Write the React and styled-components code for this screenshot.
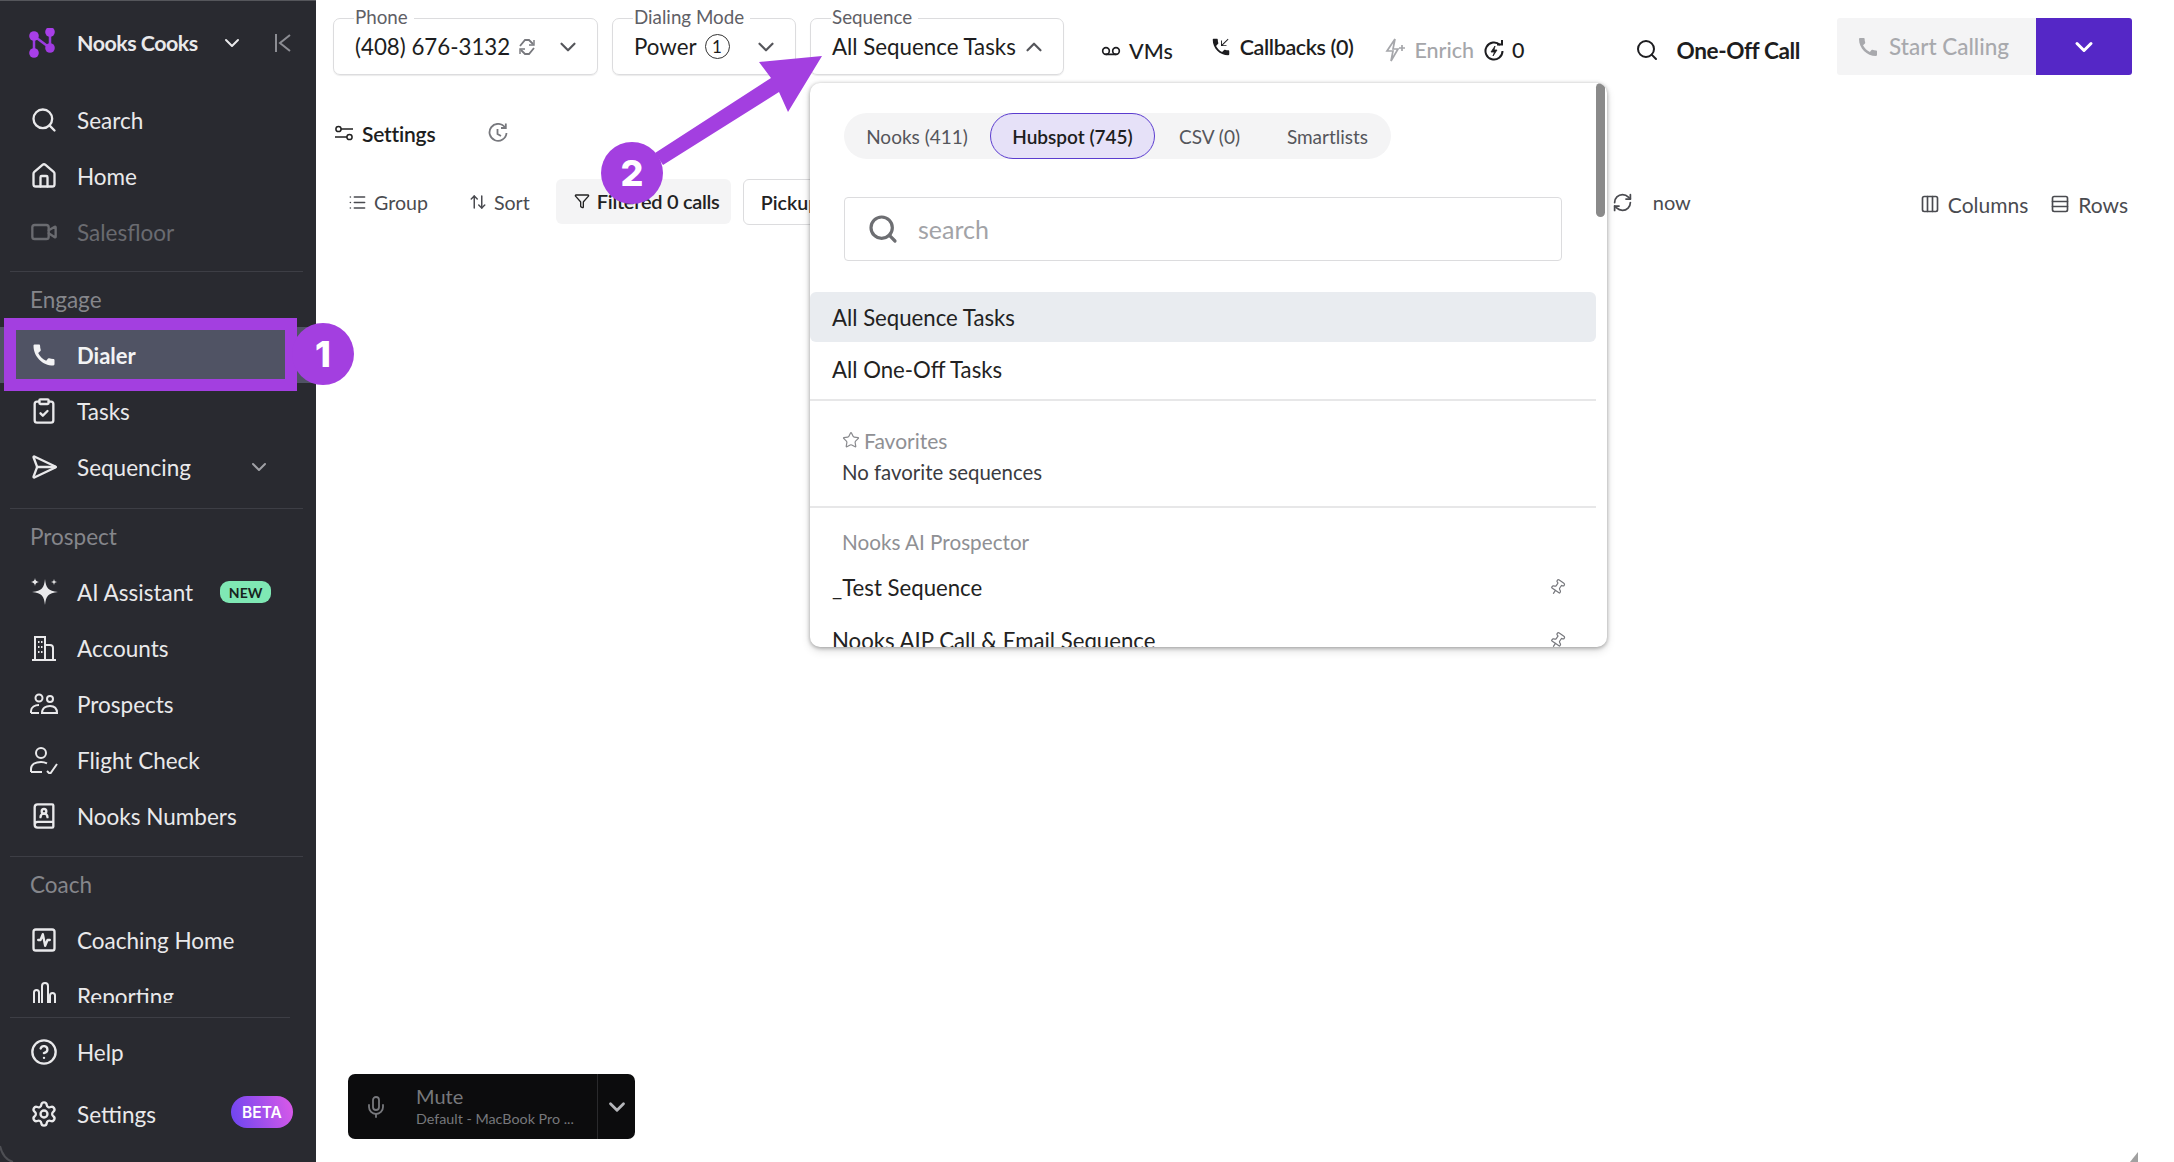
import React from "react";
import styled, { createGlobalStyle } from "styled-components";
import {
  Search,
  House,
  Video,
  ClipboardCheck,
  SendHorizontal,
  BookUser,
  SquareActivity,
  CircleHelp,
  Settings as SettingsIcon,
  ChevronDown,
  ChevronUp,
  Voicemail,
  List,
  ArrowUpDown,
  Funnel,
  RefreshCw,
  Columns3,
  Rows3,
  Star,
  Pin,
  Mic,
} from "lucide-react";
import { MdCall, MdPhoneCallback } from "react-icons/md";

const PURPLE = "#a33fe0";

const GlobalStyle = createGlobalStyle`
  html, body { margin: 0; padding: 0; background: #fff; }
  body { font-family: "Lato", "Liberation Sans", sans-serif; }
  * { box-sizing: border-box; }
`;

const Page = styled.div`
  position: relative;
  display: flex;
  width: 2174px;
  height: 1162px;
  overflow: hidden;
  background: #fff;
`;

const Sidebar = styled.aside`
  display: flex;
  flex-direction: column;
  flex: none;
  width: 316px;
  height: 100%;
  border-top: 1px solid #55565b;
  background: #292a30;
  color: #e9e9eb;
`;

const Brand = styled.div`
  display: flex;
  align-items: center;
  flex: none;
  height: 91px;
  padding: 0 0 8px 28px;
  font-size: 21.4px;
  font-weight: 700;
  letter-spacing: -0.5px;
  white-space: nowrap;
  span { margin-left: 21px; }
`;

const BrandChevron = styled.div`
  display: flex;
  margin-left: 22px;
`;

const Collapse = styled.div`
  display: flex;
  margin-left: 30px;
  color: #8c8d93;
`;

const Nav = styled.nav`
  flex: 1;
  min-height: 0;
  overflow: hidden;
`;

const Item = styled.div`
  display: flex;
  align-items: center;
  height: ${(p) => p.$height || 56}px;
  padding-left: 30px;
  font-size: 22.5px;
  color: ${(p) => (p.$off ? "#6a6b70" : "#e9e9eb")};
  svg.icon { flex: none; width: 28px; height: 28px; }
  span.name { margin-left: 19px; }
`;

const DialerItem = styled(Item)`
  background: #505364;
  font-weight: 700;
  font-size: 22px;
  color: #f3f3f5;
`;

const SectionLabel = styled.div`
  display: flex;
  align-items: center;
  height: 55px;
  padding-left: 30px;
  font-size: 22.5px;
  color: #85868b;
`;

const Rule = styled.div`
  height: 1px;
  margin: ${(p) => p.$top || 0}px ${(p) => p.$right || 13}px ${(p) => p.$bottom || 0}px 10px;
  background: #3d3e45;
`;

const Tag = styled.span`
  display: flex;
  align-items: center;
  justify-content: center;
  width: 51px;
  height: 22px;
  margin-left: 27px;
  border-radius: 9px;
  background: #7fe8b4;
  color: #17241e;
  font-size: 14px;
  font-weight: 700;
`;

const NavChevron = styled.div`
  display: flex;
  margin-left: 56px;
  color: #a0a1a6;
`;

const Foot = styled.div`
  flex: none;
  padding-top: 14px;
  padding-bottom: 17px;
`;

const BetaTag = styled.span`
  display: flex;
  align-items: center;
  justify-content: center;
  width: 62px;
  height: 32px;
  margin-left: auto;
  margin-right: 23px;
  margin-top: -4px;
  border-radius: 16px;
  background: linear-gradient(75deg, #6b45f0, #dc5ae8);
  color: #fff;
  font-family: "Inter", sans-serif;
  font-size: 15.5px;
  font-weight: 600;
`;

const Main = styled.main`
  display: flex;
  flex-direction: column;
  flex: 1;
  min-width: 0;
  height: 100%;
  color: #1d1d20;
`;

const TopBar = styled.div`
  display: flex;
  align-items: flex-start;
  flex: none;
  padding: 0 0 0 17px;
  height: 75px;
`;

const Field = styled.fieldset`
  position: relative;
  display: flex;
  align-items: center;
  width: ${(p) => p.$width}px;
  height: 67px;
  margin: 8px ${(p) => p.$gap || 0}px 0 0;
  padding: 0 0 9px 21px;
  border: 1px solid #dcdcde;
  border-radius: 7px;
  box-shadow: 0 1px 1px rgba(0, 0, 0, 0.08);
  font-size: 22.3px;
  legend {
    height: 20px;
    margin-left: -1px;
    padding: 0 6px 0 1px;
    font-size: 18.8px;
    line-height: 18px;
    color: #5f6066;
  }
`;

const FieldChevron = styled.div`
  display: flex;
  margin-left: auto;
  margin-right: 16px;
  color: #55565b;
`;

const Circled = styled.span`
  display: inline-flex;
  align-items: center;
  justify-content: center;
  width: 25px;
  height: 25px;
  margin-left: 8px;
  border: 1.5px solid #333;
  border-radius: 50%;
  font-size: 17px;
`;

const TopAction = styled.div`
  display: flex;
  align-items: center;
  gap: ${(p) => p.$gap || 8}px;
  height: 66px;
  margin-top: ${(p) => p.$top || 18}px;
  margin-left: ${(p) => p.$left || 0}px;
  font-size: ${(p) => (p.$bold ? 22.6 : 21.5)}px;
  font-weight: ${(p) => (p.$bold ? 700 : 500)};
  letter-spacing: ${(p) => (p.$bold ? -0.4 : 0)}px;
  color: ${(p) => (p.$muted ? "#a5a6aa" : "#1d1d20")};
`;

const Callbacks = styled(TopAction)`
  font-weight: 600;
  letter-spacing: -0.4px;
`;

const CallGroup = styled.div`
  display: flex;
  height: 57px;
  margin-top: 18px;
  margin-left: 37px;
`;

const StartCalling = styled.div`
  display: flex;
  align-items: center;
  gap: 9px;
  width: 199px;
  padding-left: 19px;
  background: #f4f4f5;
  color: #a8a9ad;
  font-size: 22.5px;
  font-weight: 500;
  border-radius: 3px 0 0 3px;
`;

const CallMenu = styled.div`
  display: flex;
  align-items: center;
  justify-content: center;
  width: 96px;
  background: #5527c6;
  color: #fff;
  border-radius: 0 3px 3px 0;
`;

const SettingsRow = styled.div`
  display: flex;
  align-items: center;
  flex: none;
  height: 42px;
  margin-top: 37px;
  padding-left: 18px;
  font-size: 21px;
  font-weight: 600;
  letter-spacing: -0.2px;
  span { margin-left: 8px; }
`;

const HistoryButton = styled.div`
  display: flex;
  margin-left: 53px;
  color: #77787d;
`;

const ViewBar = styled.div`
  display: flex;
  align-items: center;
  flex: none;
  height: 48px;
  margin-top: 24px;
  font-size: 19.6px;
  color: #4a4b50;
`;

const ViewAction = styled.div`
  display: flex;
  align-items: center;
  gap: 7px;
  margin-left: ${(p) => p.$left || 0}px;
`;

const WideAction = styled(ViewAction)`
  gap: 8px;
  margin-top: 4px;
  font-size: 21px;
`;

const FilteredButton = styled.div`
  display: flex;
  align-items: center;
  gap: 7px;
  width: 175px;
  height: 45px;
  margin-top: -2px;
  margin-left: 26px;
  padding-left: 18px;
  border-radius: 6px;
  background: #f4f4f5;
  color: #222;
  font-size: 20px;
  font-weight: 600;
  letter-spacing: -0.3px;
`;

const Chip = styled.div`
  display: flex;
  align-items: center;
  width: 160px;
  height: 46px;
  margin-left: 12px;
  padding-left: 17px;
  border: 1px solid #dcdcde;
  border-radius: 6px;
  color: #222;
  font-weight: 600;
`;

const NowLabel = styled.span`
  margin-left: 13px;
  font-size: 20px;
`;

const Spacer = styled.div`
  flex: 1;
`;

const MuteBar = styled.div`
  display: flex;
  align-items: stretch;
  flex: none;
  width: 287px;
  height: 65px;
  margin: 0 0 23px 32px;
  border-radius: 7px;
  background: #0c0c0d;
  color: #77787c;
`;

const MuteMain = styled.div`
  display: flex;
  align-items: center;
  flex: 1;
  padding-left: 16px;
  svg { color: #77787c; }
`;

const MuteText = styled.div`
  display: flex;
  flex-direction: column;
  margin-left: 28px;
  margin-top: -2px;
  b { font-size: 20px; font-weight: 400; line-height: 26px; }
  small { font-size: 14.3px; line-height: 20px; white-space: nowrap; }
`;

const MuteMenu = styled.div`
  display: flex;
  align-items: center;
  justify-content: center;
  width: 38px;
  border-left: 1px solid #2a2a2c;
  color: #b5b6ba;
`;

const SequenceWrap = styled.div`
  position: relative;
`;

const Dropdown = styled.div`
  position: absolute;
  top: 83px;
  left: 0;
  z-index: 3;
  display: flex;
  width: 797px;
  height: 564px;
  border-radius: 10px;
  background: #fff;
  box-shadow: 0 1px 4px rgba(0, 0, 0, 0.35), 0 4px 10px rgba(0, 0, 0, 0.12);
  overflow: hidden;
`;

const DropdownBody = styled.div`
  flex: 1;
  min-width: 0;
  overflow: hidden;
  padding-top: 30px;
`;

const ScrollTrack = styled.div`
  flex: none;
  width: 11px;
  padding-right: 2px;
`;

const ScrollThumb = styled.div`
  width: 9px;
  height: 134px;
  border-radius: 5px;
  background: #8a8a8a;
`;

const Tabs = styled.div`
  display: flex;
  align-items: center;
  width: 547px;
  height: 46px;
  margin-left: 34px;
  border-radius: 23px;
  background: #f4f4f5;
  font-size: 19px;
  color: #55565b;
`;

const Tab = styled.div`
  display: flex;
  align-items: center;
  justify-content: center;
  flex: none;
  width: ${(p) => p.$width}px;
  height: 46px;
  border-radius: 23px;
  ${(p) =>
    p.$active &&
    `
    background: #e6e1f8;
    border: 1.5px solid #5b3ccf;
    color: #1d1d20;
    font-weight: 600;
  `}
`;

const SearchBox = styled.div`
  display: flex;
  align-items: center;
  width: 718px;
  height: 64px;
  margin: 38px 0 31px 34px;
  padding-left: 22px;
  gap: 19px;
  border: 1.5px solid #dcdcde;
  border-radius: 4px;
  font-size: 25px;
  color: #a2a3a7;
  svg { color: #6d6e72; }
`;

const Row = styled.div`
  display: flex;
  align-items: center;
  height: ${(p) => p.$height || 50}px;
  margin-top: ${(p) => p.$top || 0}px;
  margin-bottom: ${(p) => p.$gap || 0}px;
  padding-left: 22px;
  padding-right: 30px;
  border-radius: 6px;
  font-size: 22.2px;
  background: ${(p) => (p.$active ? "#e9ecf0" : "transparent")};
  color: #222;
  svg { margin-left: auto; color: #77787d; transform: rotate(35deg); }
`;

const Divider = styled.div`
  height: 2px;
  margin-top: ${(p) => p.$top}px;
  background: #e7e7e8;
`;

const GroupTitle = styled.div`
  display: flex;
  align-items: center;
  gap: ${(p) => (p.$icon ? 4 : 0)}px;
  height: 30px;
  padding-left: 32px;
  font-size: ${(p) => (p.$icon ? 21 : 20.7)}px;
  color: #8f9094;
  margin-top: ${(p) => p.$top}px;
  svg { color: #88898d; }
`;

const EmptyNote = styled.div`
  margin-top: 4px;
  padding-left: 32px;
  font-size: 20.4px;
  line-height: 26px;
  color: #3a3b3f;
`;

const Annotations = styled.svg`
  position: absolute;
  left: 0;
  top: 0;
  width: 2174px;
  height: 1162px;
  z-index: 5;
  pointer-events: none;
`;

const Highlight = styled.div`
  position: absolute;
  left: 4px;
  top: 318px;
  z-index: 5;
  width: 293px;
  height: 73px;
  border: 12px solid ${PURPLE};
`;

const Step = styled.div`
  position: absolute;
  left: ${(p) => p.$x - 31}px;
  top: ${(p) => p.$y - 31}px;
  z-index: 6;
  display: flex;
  align-items: center;
  justify-content: center;
  width: 62px;
  height: 62px;
  border-radius: 50%;
  background: ${PURPLE};
  color: #fff;
  font-family: "Inter", sans-serif;
  font-size: 36px;
  font-weight: 800;
`;

function Logo() {
  return (
    <svg width="28" height="30" viewBox="0 0 28 30" fill="none">
      <path d="M6 8 V25 M6 8 L22 20 M22 4 V20" stroke="#9a3ce0" strokeWidth="2.5" />
      <circle cx="6" cy="8" r="4.8" fill="#a83fe8" />
      <circle cx="22" cy="4" r="4.8" fill="#a83fe8" />
      <circle cx="22" cy="20" r="4.8" fill="#a03be0" />
      <circle cx="6" cy="25" r="4.8" fill="#a83fe8" />
    </svg>
  );
}

function CollapseGlyph() {
  return (
    <svg width="18" height="20" viewBox="0 0 18 20" fill="none" stroke="currentColor" strokeWidth="2">
      <path d="M2 1 V19 M16 2 L6 10 L16 18" />
    </svg>
  );
}

function Sparkle() {
  return (
    <svg className="icon" viewBox="0 0 28 28" fill="currentColor">
      <path d="M15 1 C16 10 18 13 28 14 C18 15 16 18 15 27 C14 18 12 15 2 14 C12 13 14 10 15 1 Z" />
      <path d="M5 0 C5.4 2.6 6.4 3.6 9 4 C6.4 4.4 5.4 5.4 5 8 C4.6 5.4 3.6 4.4 1 4 C3.6 3.6 4.6 2.6 5 0 Z" />
      <path d="M24 1 L24.7 3.3 L27 4 L24.7 4.7 L24 7 L23.3 4.7 L21 4 L23.3 3.3 Z" />
    </svg>
  );
}

function Building() {
  return (
    <svg className="icon" viewBox="0 0 28 28" fill="none" stroke="currentColor" strokeWidth="2">
      <path d="M5 26 V3 H15 V26 M15 11 H20 C22 11 23 12 23 14 V26 M2 26 H26" />
      <path d="M8 8 H9.5 M11 8 H12.5 M8 13 H9.5 M11 13 H12.5 M8 18 H9.5 M11 18 H12.5" />
    </svg>
  );
}

function People() {
  return (
    <svg className="icon" viewBox="0 0 28 28" fill="none" stroke="currentColor" strokeWidth="2">
      <circle cx="9" cy="8" r="3.5" />
      <circle cx="20" cy="9" r="3" />
      <path d="M1 23 V21 C1 17 5 15 9 15 M1 23 H9" />
      <path d="M12 23 C12 18 16 16 20 16 C24 16 27 18 27 23 Z" />
    </svg>
  );
}

function FlightCheck() {
  return (
    <svg className="icon" viewBox="0 0 28 28" fill="none" stroke="currentColor" strokeWidth="2">
      <circle cx="11" cy="7" r="5" />
      <path d="M1 26 V23 C1 18 6 16 11 16 C13 16 15 16.4 17 17.4 M1 26 H12" />
      <path d="M17 25 L20 28 L27 18" />
    </svg>
  );
}

function Bars() {
  return (
    <svg className="icon" viewBox="0 0 28 28" fill="none" stroke="currentColor" strokeWidth="2">
      <rect x="4" y="8" width="5" height="19" rx="2.5" />
      <rect x="12" y="1" width="6" height="26" rx="3" />
      <rect x="20" y="11" width="5" height="16" rx="2.5" />
    </svg>
  );
}

function SyncGlyph() {
  return (
    <svg width="20" height="20" viewBox="0 0 20 20" fill="none" stroke="#77787d" strokeWidth="1.8" style={{ marginLeft: 7 }}>
      <path d="M3 9 L8 3 L12 3 L16 7 M17 11 L12 17 L8 17 L4 13" />
      <path d="M17 3 V8 H12 M3 17 V12 H8" strokeWidth="1.4" />
    </svg>
  );
}

function EnrichBolt() {
  return (
    <svg width="21" height="26" viewBox="0 0 21 26" fill="none" stroke="#a5a6aa" strokeWidth="1.7">
      <path d="M10 2 L2 14 H8 L6 24 L13 12 H8 Z" />
      <path d="M14 11 H20 M17 8 V14" />
    </svg>
  );
}

function CreditGlyph() {
  return (
    <svg width="20" height="22" viewBox="0 0 20 22" fill="none" stroke="#1d1d20" strokeWidth="2">
      <path d="M16 6 A8.5 8.5 0 1 0 18.5 12" />
      <path d="M11 7 L7 13 H10.5 L9 17 L13 11 H10 Z" fill="#1d1d20" strokeWidth="0.8" />
      <path d="M13 5.5 H18 V1" />
    </svg>
  );
}

function SliderGlyph() {
  return (
    <svg width="20" height="20" viewBox="0 0 20 20" fill="none" stroke="#222" strokeWidth="1.5">
      <circle cx="4.5" cy="6" r="2.6" />
      <path d="M7 6 H19 M1 14 H13" />
      <circle cx="15.5" cy="14" r="2.6" />
    </svg>
  );
}

function HistoryGlyph() {
  return (
    <svg width="20" height="20" viewBox="0 0 20 20" fill="none" stroke="currentColor" strokeWidth="1.8">
      <path d="M17 4.5 A8.5 8.5 0 1 0 18.5 10" />
      <path d="M9.5 6 V11 L13 13 M13 5 H17.8 V0.5" />
    </svg>
  );
}

export default function App() {
  return (
    <Page>
      <GlobalStyle />
      <Sidebar>
        <Brand>
          <Logo />
          <span>Nooks Cooks</span>
          <BrandChevron>
            <ChevronDown size={24} strokeWidth={2} />
          </BrandChevron>
          <Collapse>
            <CollapseGlyph />
          </Collapse>
        </Brand>
        <Nav>
          <Item>
            <Search className="icon" strokeWidth={2} />
            <span className="name">Search</span>
          </Item>
          <Item>
            <House className="icon" strokeWidth={2} />
            <span className="name">Home</span>
          </Item>
          <Item $off>
            <Video className="icon" strokeWidth={2} />
            <span className="name">Salesfloor</span>
          </Item>
          <Rule $top={11} />
          <SectionLabel>Engage</SectionLabel>
          <DialerItem>
            <MdCall className="icon" />
            <span className="name">Dialer</span>
          </DialerItem>
          <Item>
            <ClipboardCheck className="icon" strokeWidth={2} />
            <span className="name">Tasks</span>
          </Item>
          <Item>
            <SendHorizontal className="icon" strokeWidth={2} />
            <span className="name">Sequencing</span>
            <NavChevron>
              <ChevronDown size={24} strokeWidth={2} />
            </NavChevron>
          </Item>
          <Rule $top={13} />
          <SectionLabel>Prospect</SectionLabel>
          <Item>
            <Sparkle />
            <span className="name">AI Assistant</span>
            <Tag>NEW</Tag>
          </Item>
          <Item>
            <Building />
            <span className="name">Accounts</span>
          </Item>
          <Item>
            <People />
            <span className="name">Prospects</span>
          </Item>
          <Item>
            <FlightCheck />
            <span className="name">Flight Check</span>
          </Item>
          <Item>
            <BookUser className="icon" strokeWidth={2} />
            <span className="name">Nooks Numbers</span>
          </Item>
          <Rule $top={12} />
          <SectionLabel>Coach</SectionLabel>
          <Item>
            <SquareActivity className="icon" strokeWidth={2} />
            <span className="name">Coaching Home</span>
          </Item>
          <Item>
            <Bars />
            <span className="name">Reporting</span>
          </Item>
        </Nav>
        <Foot>
          <Rule $right={26} $bottom={3} />
          <Item $height={62}>
            <CircleHelp className="icon" strokeWidth={2} />
            <span className="name">Help</span>
          </Item>
          <Item $height={62}>
            <SettingsIcon className="icon" strokeWidth={2} />
            <span className="name">Settings</span>
            <BetaTag>BETA</BetaTag>
          </Item>
        </Foot>
      </Sidebar>
      <Main>
        <TopBar>
          <Field $width={265} $gap={14}>
            <legend>Phone</legend>
            (408) 676-3132
            <SyncGlyph />
            <FieldChevron>
              <ChevronDown size={26} strokeWidth={2} />
            </FieldChevron>
          </Field>
          <Field $width={184} $gap={14}>
            <legend>Dialing Mode</legend>
            Power
            <Circled>1</Circled>
            <FieldChevron>
              <ChevronDown size={26} strokeWidth={2} />
            </FieldChevron>
          </Field>
          <SequenceWrap>
            <Field $width={254}>
              <legend>Sequence</legend>
              All Sequence Tasks
              <FieldChevron>
                <ChevronUp size={26} strokeWidth={2} />
              </FieldChevron>
            </Field>
            <Dropdown>
              <DropdownBody>
                <Tabs>
                  <Tab $width={146}>Nooks (411)</Tab>
                  <Tab $width={165} $active>
                    Hubspot (745)
                  </Tab>
                  <Tab $width={109}>CSV (0)</Tab>
                  <Tab $width={127}>Smartlists</Tab>
                </Tabs>
                <SearchBox>
                  <Search size={32} strokeWidth={2.4} />
                  search
                </SearchBox>
                <Row $active $gap={2}>
                  All Sequence Tasks
                </Row>
                <Row>All One-Off Tasks</Row>
                <Divider $top={5} />
                <GroupTitle $icon $top={24}>
                  <Star size={18} strokeWidth={1.6} />
                  Favorites
                </GroupTitle>
                <EmptyNote>No favorite sequences</EmptyNote>
                <Divider $top={21} />
                <GroupTitle $top={19}>Nooks AI Prospector</GroupTitle>
                <Row $top={5}>
                  _Test Sequence
                  <Pin size={17} strokeWidth={1.7} />
                </Row>
                <Row $height={56}>
                  Nooks AIP Call &amp; Email Sequence
                  <Pin size={17} strokeWidth={1.7} />
                </Row>
              </DropdownBody>
              <ScrollTrack>
                <ScrollThumb />
              </ScrollTrack>
            </Dropdown>
          </SequenceWrap>
          <TopAction $left={37}>
            <Voicemail size={20} strokeWidth={2} />
            VMs
          </TopAction>
          <Callbacks $left={37} $top={14}>
            <MdPhoneCallback size={22} />
            Callbacks (0)
          </Callbacks>
          <TopAction $left={32} $top={17} $muted>
            <EnrichBolt />
            Enrich
          </TopAction>
          <TopAction $left={10} $top={17}>
            <CreditGlyph />0
          </TopAction>
          <TopAction $left={111} $top={17} $bold $gap={17}>
            <Search size={24} strokeWidth={2} />
            One-Off Call
          </TopAction>
          <CallGroup>
            <StartCalling>
              <MdCall size={24} />
              Start Calling
            </StartCalling>
            <CallMenu>
              <ChevronDown size={28} strokeWidth={2.6} />
            </CallMenu>
          </CallGroup>
        </TopBar>
        <SettingsRow>
          <SliderGlyph />
          <span>Settings</span>
          <HistoryButton>
            <HistoryGlyph />
          </HistoryButton>
        </SettingsRow>
        <ViewBar>
          <ViewAction $left={32}>
            <List size={19} strokeWidth={2} />
            Group
          </ViewAction>
          <ViewAction $left={41}>
            <ArrowUpDown size={18} strokeWidth={2} />
            Sort
          </ViewAction>
          <FilteredButton>
            <Funnel size={16} strokeWidth={2} />
            Filtered 0 calls
          </FilteredButton>
          <Chip>Pickup</Chip>
          <ViewAction $left={709}>
            <RefreshCw size={21} strokeWidth={2} />
            <NowLabel>now</NowLabel>
          </ViewAction>
          <WideAction $left={229}>
            <Columns3 size={20} strokeWidth={2} />
            Columns
          </WideAction>
          <WideAction $left={22}>
            <Rows3 size={20} strokeWidth={2} />
            Rows
          </WideAction>
        </ViewBar>
        <Spacer />
        <MuteBar>
          <MuteMain>
            <Mic size={24} strokeWidth={1.8} />
            <MuteText>
              <b>Mute</b>
              <small>Default - MacBook Pro ...</small>
            </MuteText>
          </MuteMain>
          <MuteMenu>
            <ChevronDown size={26} strokeWidth={2.6} />
          </MuteMenu>
        </MuteBar>
      </Main>
      <Highlight />
      <Annotations viewBox="0 0 2174 1162">
        <polygon
          points="822,56 759,62 771,78 655,153 663,165 779,92 788,112"
          fill={PURPLE}
        />
        <path d="M0 1146 Q3 1159 13 1162" fill="none" stroke="#4e4f54" strokeWidth="2" />
        <polygon points="2138,1152 2138,1162 2130,1162" fill="#a0a0a0" />
      </Annotations>
      <Step $x={323} $y={354}>1</Step>
      <Step $x={632} $y={173}>2</Step>
    </Page>
  );
}
